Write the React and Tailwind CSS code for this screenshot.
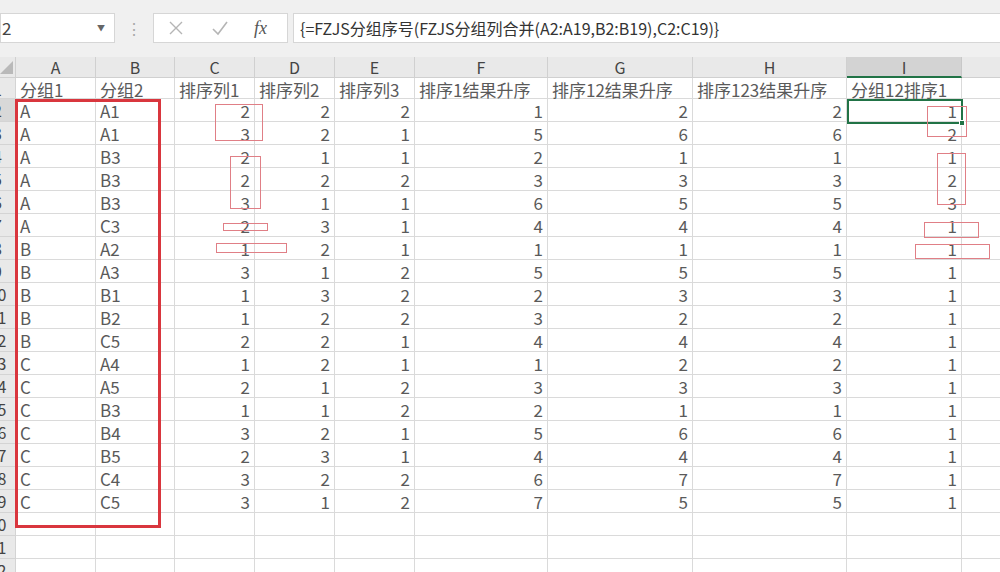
const cols = [
  { k: "A", w: 80 },
  { k: "B", w: 79 },
  { k: "C", w: 80 },
  { k: "D", w: 80 },
  { k: "E", w: 80 },
  { k: "F", w: 133 },
  { k: "G", w: 145 },
  { k: "H", w: 154 },
  { k: "I", w: 115 },
  { k: "J", w: 90 },
];

const head = ["分组1", "分组2", "排序列1", "排序列2", "排序列3", "排序1结果升序", "排序12结果升序", "排序123结果升序", "分组12排序1"];

const data = [
  ["A", "A1", 2, 2, 2, 1, 2, 2, 1],
  ["A", "A1", 3, 2, 1, 5, 6, 6, 2],
  ["A", "B3", 2, 1, 1, 2, 1, 1, 1],
  ["A", "B3", 2, 2, 2, 3, 3, 3, 2],
  ["A", "B3", 3, 1, 1, 6, 5, 5, 3],
  ["A", "C3", 2, 3, 1, 4, 4, 4, 1],
  ["B", "A2", 1, 2, 1, 1, 1, 1, 1],
  ["B", "A3", 3, 1, 2, 5, 5, 5, 1],
  ["B", "B1", 1, 3, 2, 2, 3, 3, 1],
  ["B", "B2", 1, 2, 2, 3, 2, 2, 1],
  ["B", "C5", 2, 2, 1, 4, 4, 4, 1],
  ["C", "A4", 1, 2, 1, 1, 2, 2, 1],
  ["C", "A5", 2, 1, 2, 3, 3, 3, 1],
  ["C", "B3", 1, 1, 2, 2, 1, 1, 1],
  ["C", "B4", 3, 2, 1, 5, 6, 6, 1],
  ["C", "B5", 2, 3, 1, 4, 4, 4, 1],
  ["C", "C4", 3, 2, 2, 6, 7, 7, 1],
  ["C", "C5", 3, 1, 2, 7, 5, 5, 1],
];

const font = { fontFamily: '"Noto Sans CJK SC", "Noto Sans", sans-serif' };

// thin pink boxes drawn over the sheet
const marks = [
  [215, 104, 48, 37],
  [230, 156, 31, 53],
  [223, 223, 45, 8],
  [216, 243, 71, 10],
  [927, 106, 40, 31],
  [937, 153, 29, 52],
  [924, 222, 55, 16],
  [915, 244, 75, 15],
];

function RowHead({ n, active, h }) {
  return (
    <div
      className={`-ml-[20px] w-[36px] shrink-0 border-r border-b border-[#d4d4d4] text-center text-[16px] text-[#444] ${active ? "bg-[#d8d8d8]" : "bg-[#e9e9e9]"} ${h}`}
      style={{ lineHeight: "23px" }}
    >
      {n}
    </div>
  );
}

function Row({ n, cells, h }) {
  return (
    <div className="flex">
      <RowHead n={n} active={n === 2} h={h} />
      {cols.map((c, i) => {
        const v = cells ? cells[i] : undefined;
        const num = typeof v === "number";
        return (
          <div
            key={c.k}
            style={{ width: c.w, lineHeight: "23px" }}
            className={`shrink-0 overflow-visible whitespace-nowrap border-r border-b border-[#dadada] px-[4px] text-[17px] text-[#5a5a5a] ${h} ${num ? "text-right" : "text-left"}`}
          >
            {v ?? ""}
          </div>
        );
      })}
    </div>
  );
}

export default function App() {
  return (
    <div className="relative h-[572px] w-[1000px] overflow-hidden bg-white" style={font}>
      {/* formula bar */}
      <div className="flex h-[57px] items-start bg-[#f0f0f0] pt-[13px]">
        <div className="flex h-[30px] w-[115px] items-center justify-between border border-[#d6d6d6] bg-white pl-[1px] pr-[9px]">
          <span className="text-[17px] text-[#444]">2</span>
          <span className="text-[8px] text-[#666]">▼</span>
        </div>
        <div className="flex h-[30px] w-[38px] items-center justify-center text-[#a8a8a8]">
          <span className="text-[16px] leading-none">⋮</span>
        </div>
        <div className="flex h-[30px] w-[135px] items-center border border-[#d6d6d6] bg-white pl-[14px]">
          <svg width="16" height="16" viewBox="0 0 16 16" className="shrink-0">
            <path d="M2 2 L14 14 M14 2 L2 14" stroke="#b5b5b5" strokeWidth="1.4" fill="none" />
          </svg>
          <svg width="18" height="16" viewBox="0 0 18 16" className="ml-[27px] shrink-0">
            <path d="M2 9 L7 14 L16 2" stroke="#b5b5b5" strokeWidth="1.6" fill="none" />
          </svg>
          <span
            className="ml-[25px] text-[18px] italic text-[#555]"
            style={{ fontFamily: '"Liberation Serif", serif' }}
          >
            fx
          </span>
        </div>
        <div className="ml-[5px] flex h-[30px] flex-1 items-center border border-r-0 border-[#d6d6d6] bg-white pl-[6px]">
          <span className="whitespace-nowrap text-[16px] text-[#333]">
            {"{=FZJS分组序号(FZJS分组列合并(A2:A19,B2:B19),C2:C19)}"}
          </span>
        </div>
      </div>

      {/* column headers */}
      <div className="flex h-[21px]">
        <div className="relative -ml-[20px] w-[36px] shrink-0 border-r border-b border-[#d0d0d0] bg-[#e9e9e9]">
          <svg width="13" height="13" viewBox="0 0 13 13" className="absolute bottom-[3px] right-[2px]">
            <path d="M13 0 L13 13 L0 13 Z" fill="#b9b9b9" />
          </svg>
        </div>
        {cols.map((c) => (
          <div
            key={c.k}
            style={{ width: c.w, lineHeight: "20px" }}
            className={`shrink-0 border-r text-center text-[16px] text-[#444] ${c.k === "I" ? "border-b-2 border-b-[#217346] border-r-[#c8c8c8] bg-[#d3d3d3]" : "border-b border-[#d0d0d0] bg-[#e9e9e9]"}`}
          >
            {c.k}
          </div>
        ))}
      </div>

      {/* sheet */}
      <Row n={1} cells={head} h="h-[21px]" />
      {data.map((r, i) => (
        <Row key={i} n={i + 2} cells={r} h="h-[23px]" />
      ))}
      <Row n={20} h="h-[23px]" />
      <Row n={21} h="h-[23px]" />
      <Row n={22} h="h-[23px]" />

      {/* selected cell I2 */}
      <div className="absolute left-[847px] top-[99px] h-[25px] w-[116px] border-2 border-[#217346]">
        <div className="absolute -bottom-[4px] -right-[4px] h-[6px] w-[6px] border border-white bg-[#217346]" />
      </div>

      {/* big red frame */}
      <div className="absolute left-[15px] top-[99px] h-[429px] w-[146px] border-[3px] border-[#d9363e]" />

      {marks.map(([x, y, w, h], i) => (
        <div
          key={i}
          className="absolute border border-[#e07f86]"
          style={{ left: x, top: y, width: w, height: h }}
        />
      ))}
    </div>
  );
}
